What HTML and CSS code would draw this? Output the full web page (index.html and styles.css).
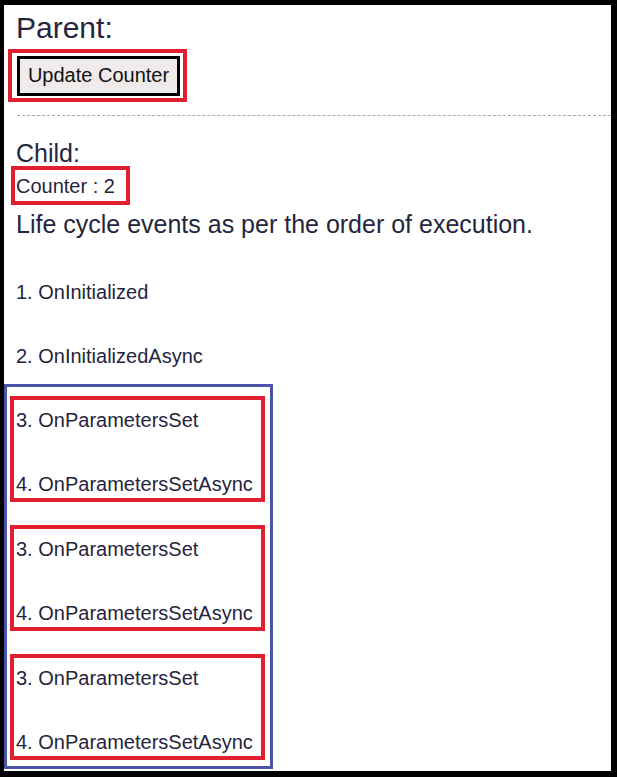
FILE: index.html
```html
<!DOCTYPE html>
<html>
<head>
<meta charset="utf-8">
<link rel="stylesheet" href="styles.css">
</head>
<body>
<div class="frame">
  <h3 class="parent-title">Parent:</h3>
  <div class="mark mark-button">
    <button class="update-btn" type="button">Update Counter</button>
  </div>
  <hr class="divider">
  <h4 class="child-title">Child:</h4>
  <div class="mark mark-counter">Counter : 2</div>
  <p class="lead">Life cycle events as per the order of execution.</p>
  <p class="event event-first">1. OnInitialized</p>
  <p class="event">2. OnInitializedAsync</p>
  <div class="blue-group">
    <div class="mark mark-pair">
      <p class="event">3. OnParametersSet</p>
      <p class="event">4. OnParametersSetAsync</p>
    </div>
    <div class="mark mark-pair">
      <p class="event">3. OnParametersSet</p>
      <p class="event">4. OnParametersSetAsync</p>
    </div>
    <div class="mark mark-pair">
      <p class="event">3. OnParametersSet</p>
      <p class="event">4. OnParametersSetAsync</p>
    </div>
  </div>
</div>
</body>
</html>
```

FILE: styles.css
```css
* { box-sizing: border-box; }

html, body {
  margin: 0;
  padding: 0;
  background: #ffffff;
}

body {
  font-family: "Liberation Sans", Arial, sans-serif;
  color: #25253d;
}

.frame {
  width: 617px;
  height: 777px;
  border-style: solid;
  border-color: #000000;
  border-width: 5px 6px 6px 4px;
  overflow: hidden;
  background: #ffffff;
}

.parent-title {
  margin: 6px 0 0 12px;
  font-size: 30px;
  line-height: 34px;
  font-weight: normal;
}

.mark {
  border: 4px solid #e0202e;
}

.mark-button {
  display: inline-block;
  margin: 4px 0 0 4px;
  padding: 3px 3px 2px 5px;
  vertical-align: top;
}

.update-btn {
  display: block;
  width: 163px;
  height: 40px;
  margin: 0;
  padding: 5px 0 6px;
  border: 3px solid #000000;
  border-radius: 0;
  background: #efebea;
  color: #111111;
  font-family: "Liberation Sans", Arial, sans-serif;
  font-size: 20px;
  line-height: 23px;
  text-align: center;
}

.divider {
  margin: 13px 0 0 13px;
  border: 0;
  border-top: 1px dashed #a9a9a9;
  height: 0;
}

.child-title {
  margin: 25px 0 0 12px;
  font-size: 25px;
  line-height: 25px;
  font-weight: normal;
}

.mark-counter {
  display: inline-block;
  margin-left: 7px;
  padding: 5px 11px 3px 1px;
  font-size: 20px;
  line-height: 23px;
  vertical-align: top;
}

.lead {
  margin: 5px 0 0 12px;
  font-size: 25px;
  line-height: 29px;
}

.event {
  margin: 41px 0 0 12px;
  font-size: 20px;
  line-height: 23px;
}

.event-first {
  margin-top: 42px;
}

.blue-group {
  width: 269px;
  margin-top: 16px;
  border: 3px solid #4b54a8;
  padding: 9px 0 6px 3px;
  display: flex;
  flex-direction: column;
  gap: 23px;
}

.mark-pair {
  width: 255px;
  padding: 9px 0 2px 2px;
}

.mark-pair .event {
  margin: 41px 0 0 0;
}

.mark-pair .event:first-child {
  margin-top: 0;
}
```
